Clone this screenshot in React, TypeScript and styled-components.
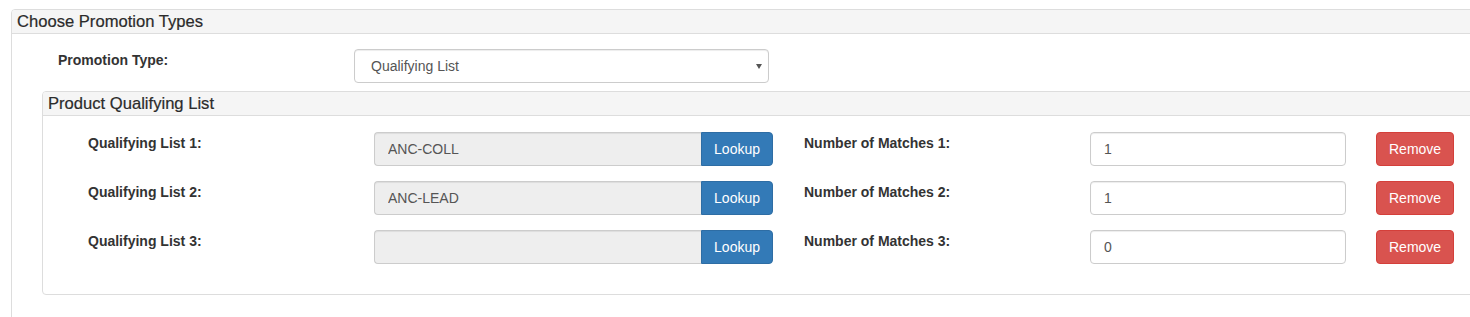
import React from "react";
import styled, { createGlobalStyle, css } from "styled-components";

const GlobalStyle = createGlobalStyle`
  html, body {
    margin: 0;
    padding: 0;
    overflow: hidden;
    background: #ffffff;
  }
  body {
    font-family: "Liberation Sans", Arial, Helvetica, sans-serif;
    font-size: 14px;
    line-height: 20px;
    color: #333333;
  }
  * {
    box-sizing: border-box;
  }
`;

const Page = styled.div`
  padding: 9px 0 0 11px;
  width: 1500px;
`;

const Panel = styled.div<{ nested?: boolean }>`
  border: 1px solid #dddddd;
  border-radius: 4px;
  background: #ffffff;
  ${(props) =>
    props.nested &&
    css`
      margin: 8px 0 0 30px;
    `}
`;

const PanelHeading = styled.div`
  background: #f5f5f5;
  border-bottom: 1px solid #dddddd;
  border-radius: 3px 3px 0 0;
  padding: 2px 5px 2px;
  font-size: 16.6px;
  line-height: 19px;
  color: #2b2b2b;
  -webkit-text-stroke: 0.2px #2b2b2b;
`;

const OuterBody = styled.div`
  padding: 15px 0 30px 0;
`;

const InnerBody = styled.div`
  padding: 16px 0 30px 45px;
  display: flex;
  flex-direction: column;
  gap: 15px;
`;

const TypeRow = styled.div`
  display: flex;
  align-items: flex-start;
  padding-left: 46px;
`;

const Row = styled.div`
  display: flex;
  align-items: flex-start;
  height: 34px;
`;

const Label = styled.label<{ width: number }>`
  width: ${(props) => props.width}px;
  flex: none;
  font-weight: bold;
  font-size: 14px;
  line-height: 20px;
  padding-top: 1px;
  color: #333333;
`;

const SelectWrap = styled.div`
  position: relative;
  width: 415px;
  &::after {
    content: "";
    position: absolute;
    right: 7px;
    top: 15px;
    border-left: 3px solid transparent;
    border-right: 3px solid transparent;
    border-top: 5px solid #555555;
  }
`;

const Select = styled.select`
  appearance: none;
  -webkit-appearance: none;
  width: 100%;
  height: 34px;
  padding: 6px 12px 6px 16px;
  border: 1px solid #cccccc;
  border-radius: 4px;
  background: #ffffff;
  box-shadow: inset 0 1px 1px rgba(0, 0, 0, 0.075);
  font-family: inherit;
  font-size: 14px;
  color: #555555;
`;

const InputGroup = styled.div`
  display: flex;
  width: 399px;
  margin-right: 31px;
  flex: none;
`;

const TextInput = styled.input<{ readOnlyLook?: boolean; width?: number }>`
  height: 34px;
  padding: 6px 12px 6px 13px;
  border: 1px solid #cccccc;
  border-radius: 4px;
  box-shadow: inset 0 1px 1px rgba(0, 0, 0, 0.075);
  font-family: inherit;
  font-size: 14px;
  color: #555555;
  background: #ffffff;
  ${(props) =>
    props.width &&
    css`
      width: ${props.width}px;
      flex: none;
    `}
  ${(props) =>
    props.readOnlyLook &&
    css`
      flex: 1;
      min-width: 0;
      background: #eeeeee;
      border-radius: 4px 0 0 4px;
      border-right: 0;
    `}
`;

const Button = styled.button<{ variant: "primary" | "danger"; attached?: boolean }>`
  height: 34px;
  padding: 6px 12px;
  border: 1px solid;
  border-radius: 4px;
  font-family: inherit;
  font-size: 14px;
  line-height: 20px;
  color: #ffffff;
  white-space: nowrap;
  flex: none;
  cursor: pointer;
  ${(props) =>
    props.variant === "primary"
      ? css`
          background: #337ab7;
          border-color: #2e6da4;
        `
      : css`
          background: #d9534f;
          border-color: #d43f3a;
        `}
  ${(props) =>
    props.attached &&
    css`
      border-radius: 0 4px 4px 0;
    `}
`;

const Spacer = styled.div`
  width: 30px;
  flex: none;
`;

const lists = [
  { code: "ANC-COLL", matches: "1" },
  { code: "ANC-LEAD", matches: "1" },
  { code: "", matches: "0" },
];

export default function App() {
  return (
    <>
      <GlobalStyle />
      <Page>
        <Panel>
          <PanelHeading>Choose Promotion Types</PanelHeading>
          <OuterBody>
            <TypeRow>
              <Label width={296}>Promotion Type:</Label>
              <SelectWrap>
                <Select defaultValue="qualifying">
                  <option value="qualifying">Qualifying List</option>
                </Select>
              </SelectWrap>
            </TypeRow>
            <Panel nested>
              <PanelHeading>Product Qualifying List</PanelHeading>
              <InnerBody>
                {lists.map((item, i) => (
                  <Row key={i}>
                    <Label width={286}>Qualifying List {i + 1}:</Label>
                    <InputGroup>
                      <TextInput readOnlyLook readOnly value={item.code} />
                      <Button variant="primary" attached>
                        Lookup
                      </Button>
                    </InputGroup>
                    <Label width={286}>Number of Matches {i + 1}:</Label>
                    <TextInput width={256} defaultValue={item.matches} />
                    <Spacer />
                    <Button variant="danger">Remove</Button>
                  </Row>
                ))}
              </InnerBody>
            </Panel>
          </OuterBody>
        </Panel>
      </Page>
    </>
  );
}
